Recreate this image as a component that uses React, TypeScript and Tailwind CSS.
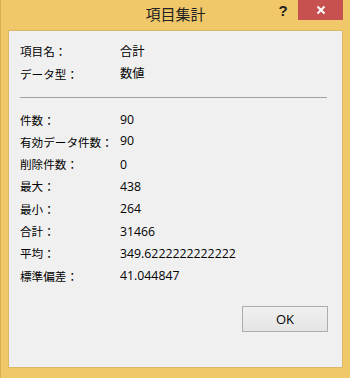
import React from 'react';

const rows: [string, string][] = [
  ['件数：', '90'],
  ['有効データ件数：', '90'],
  ['削除件数：', '0'],
  ['最大：', '438'],
  ['最小：', '264'],
  ['合計：', '31466'],
  ['平均：', '349.6222222222222'],
  ['標準偏差：', '41.044847'],
];

const font = { fontFamily: '"Open Sans", "Noto Sans CJK JP", sans-serif' };

function Row({ label, value, lift }: { label: string; value: string; lift?: boolean }) {
  return (
    <div className="flex items-center h-[22.3px] text-black">
      <span className="w-[100px] shrink-0 text-[11.6px]">{label}</span>
      <span className={`text-[12.3px] ${lift ? 'pb-[3px]' : ''}`}>{value}</span>
    </div>
  );
}

export default function App() {
  return (
    <div
      className="w-[350px] h-[378px] bg-[#f0c86a] border-l border-[#d9ae55] flex flex-col overflow-hidden"
      style={font}
    >
      {/* タイトルバー */}
      <div className="h-[30px] shrink-0 flex items-start relative">
        <div className="absolute inset-x-0 top-[4px] text-center text-[15px] text-[#222] leading-[20px]">
          項目集計
        </div>
        <div className="ml-auto flex items-start">
          <span className="w-[10px] mr-[10px] mt-[1px] text-[15px] font-bold text-[#222] text-center leading-[20px]" style={{ fontFamily: '"Liberation Sans", sans-serif' }}>
            ?
          </span>
          <div className="w-[45px] h-[20px] bg-[#c75050] flex items-center justify-center mr-[7px]">
            <svg width="10" height="10" viewBox="0 0 10 10">
              <path d="M1.5 1.5 L8.5 8.5 M8.5 1.5 L1.5 8.5" stroke="#fff" strokeWidth="2" />
            </svg>
          </div>
        </div>
      </div>

      {/* クライアント領域 */}
      <div className="mx-[7px] h-[338px] shrink-0 bg-[#f0f0f0] border border-[#dbb868] flex flex-col pl-[11px] pr-[14px] pt-[10px]">
        <Row label="項目名：" value="合計" />
        <Row label="データ型：" value="数値" />
        <div className="h-[23.5px] flex items-center pr-[1px]">
          <div className="w-full h-px bg-[#a0a0a0]" />
        </div>
        {rows.map(([label, value], i) => (
          <Row key={label} label={label} value={value} lift={i === 1} />
        ))}
        <div className="flex justify-end mt-[19px]">
          <button className="w-[86px] h-[26px] border border-[#adadad] bg-gradient-to-b from-[#f0f0f0] to-[#e5e5e5] text-[13px] text-black">
            OK
          </button>
        </div>
      </div>
    </div>
  );
}
